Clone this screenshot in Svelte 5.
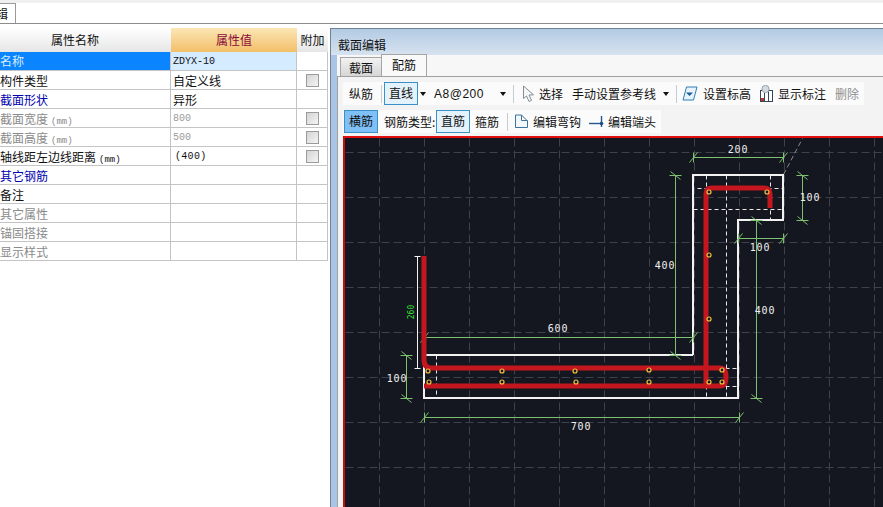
<script>
const rows = [
  { name: "名称", value: "ZDYX-10", selected: true },
  { name: "构件类型", value: "自定义线", cjk: true, check: true },
  { name: "截面形状", value: "异形", cjk: true, kind: "blue" },
  { name: "截面宽度", unit: "(mm)", value: "800", kind: "gray", check: true },
  { name: "截面高度", unit: "(mm)", value: "500", kind: "gray", check: true },
  { name: "轴线距左边线距离", unit: "(mm)", value: "(400)", indent: true, check: true },
  { name: "其它钢筋", value: "", kind: "blue" },
  { name: "备注", value: "" },
  { name: "其它属性", value: "", kind: "gray" },
  { name: "锚固搭接", value: "", kind: "gray" },
  { name: "显示样式", value: "", kind: "gray" }
]

const gridX = [379, 424, 469, 514, 559, 604, 649, 694, 739, 784, 829, 874]
const gridY = [152, 197, 242, 287, 332, 377, 422, 467]

const dots = [
  [428, 371], [429, 382], [502, 371], [502, 382], [575, 371], [576, 382],
  [649, 370], [649, 382], [722, 370], [722, 382], [709, 382],
  [709, 319], [709, 255], [709, 192], [767, 192]
]

// dimension lines: [x1, y1, x2, y2]
const dims = [
  [693, 157, 783, 157],
  [802, 175, 802, 220],
  [738, 238, 783, 238],
  [756, 220, 756, 238],
  [675, 175, 675, 355],
  [424, 337, 693, 337],
  [756, 238, 756, 398],
  [424, 417, 739, 417],
  [406, 355, 406, 398]
]
// ends of horizontal dimensions get a "/" tick, vertical ones a "\" tick
const hTicks = [[693, 157], [783, 157], [738, 238], [783, 238], [424, 337], [693, 337], [424, 417], [739, 417]]
const vTicks = [[802, 175], [802, 220], [756, 220], [675, 175], [675, 355], [756, 398], [406, 355], [406, 398]]

const labels = [
  ["200", 738, 153], ["100", 810, 201], ["100", 760, 251], ["400", 665, 269],
  ["600", 558, 332], ["400", 765, 314], ["700", 581, 430], ["100", 397, 382]
]
</script>

<div class="page">
  <div class="tabbar">
    <div class="doc-tab"><span>辑</span></div>
  </div>
  <div class="main">
    <div class="left">
      <div class="grid">
        <div class="hd first-hd">属性名称</div>
        <div class="hd val">属性值</div>
        <div class="hd">附加</div>
        {#each rows as r}
          <div class="cell name {r.kind || ''}" class:selected={r.selected}>{r.name}{#if r.unit}<span class="unit">{r.unit}</span>{/if}</div>
          <div class="cell value" class:cjk={r.cjk} class:indent={r.indent} class:selected-val={r.selected} class:muted={r.kind === "gray"}>{r.value}</div>
          <div class="cell chk">{#if r.check}<span class="box"></span>{/if}</div>
        {/each}
      </div>
    </div>

    <div class="panel">
      <div class="title">截面编辑</div>
      <div class="tabs">
        <div class="tab">截面</div>
        <div class="tab active">配筋</div>
      </div>
      <div class="content">
        <div class="bar one">
          <span class="t first">纵筋</span>
          <i class="sep"></i>
          <span class="btn line">直线</span>
          <i class="arrow a1"></i>
          <span class="spec">A8@200</span>
          <i class="arrow a2"></i>
          <i class="sep s2"></i>
          <svg class="ico cur" width="13" height="18" viewBox="0 0 13 18"><path d="M1.5 1 L1.5 13.5 L4.5 11 L7 16.5 L9.5 15.3 L7 10 L11.5 9.8 Z" fill="#f6f7f8" stroke="#838c95" /></svg>
          <span class="t sel">选择</span>
          <span class="t manual">手动设置参考线</span>
          <i class="arrow a3"></i>
          <i class="sep s3"></i>
          <svg class="ico flag" width="16" height="15" viewBox="0 0 16 15"><path d="M4.5 1 H15 L11.5 14 H1 Z" fill="#e8f3fb" stroke="#2f7fb5" /><path d="M4 6.5 H11 L7.5 10 Z" fill="#1d5f95" /></svg>
          <span class="t">设置标高</span>
          <svg class="ico chart" width="15" height="17" viewBox="0 0 15 17"><rect x="1.5" y="5.5" width="12" height="11" fill="#fff" stroke="#33465a" /><path d="M5.5 8V16M9.5 6V16" stroke="#33465a" /><rect x="2" y="13" width="3" height="3" fill="#b33" /><circle cx="6.5" cy="4" r="3.6" fill="#d4dae0" stroke="#97a0aa" /></svg>
          <span class="t">显示标注</span>
          <span class="t del">删除</span>
        </div>
        <div class="bar two">
          <span class="btn on">横筋</span>
          <span class="t kind">钢筋类型:</span>
          <span class="btn straight">直筋</span>
          <span class="t stir">箍筋</span>
          <i class="sep s4"></i>
          <svg class="ico hook" width="15" height="15" viewBox="0 0 15 15"><path d="M1.5 1 H7.5 V6.5 H13.5 V13.5 H1.5 Z" fill="#f2f7fb" stroke="#3f719b" /><path d="M7.5 1 L13 6.5" stroke="#3f719b" /></svg>
          <span class="t">编辑弯钩</span>
          <svg class="ico end" width="16" height="13" viewBox="0 0 16 13"><path d="M0 8.5 H14" stroke="#24598f" stroke-width="1.4" /><path d="M12.5 1 V12" stroke="#24598f" stroke-width="1.4" /><circle cx="12.5" cy="8.5" r="1.8" fill="#1d4f85" /></svg>
          <span class="t">编辑端头</span>
        </div>
        <div class="canvas">
          <svg width="538" height="369" viewBox="345 138 538 369">
            <rect x="345" y="138" width="538" height="369" fill="#14171f" />
            <g transform="translate(0.5 0.5)">
              {#each gridX as x}
                <line x1={x} y1="138" x2={x} y2="507" class="gridline" />
              {/each}
              {#each gridY as y}
                <line x1="345" y1={y} x2="883" y2={y} class="gridline" />
              {/each}
              <path d="M783 174 L802 138" class="helper" />
              <path d="M706 175V398M726 175V398M770 175V220M436 355V398M697 188H783M693 209H783M725 368H738M725 386H738" class="dash" />
            </g>

            <path d="M693 355V175H783V220H738V398H424V355H693" class="outline" />

            <g transform="translate(0.5 0.5)">
              {#each dims as d}
                <line x1={d[0]} y1={d[1]} x2={d[2]} y2={d[3]} class="dim" />
              {/each}
              {#each hTicks as t}
                <path d="M{t[0] - 4} {t[1] + 5} L{t[0] + 4} {t[1] - 5} M{t[0]} {t[1] - 5} V{t[1] + 5}" class="dim" />
              {/each}
              {#each vTicks as t}
                <path d="M{t[0] - 5} {t[1] - 4} L{t[0] + 5} {t[1] + 4} M{t[0] - 6} {t[1]} H{t[0] + 6}" class="dim" />
              {/each}
              <path d="M417 256V368M414 256H420M414 368H420" class="white-dim" />
            </g>
            <text class="small" transform="translate(414 312) rotate(-90)" text-anchor="middle">260</text>

            <path d="M424 256V360Q424 368 432 368H720Q726 368 726 377Q726 386 720 386H424" class="bar-steel" />
            <path d="M706 386V194Q706 188 712 188H764Q770 188 770 194V208" class="bar-steel" />

            {#each dots as d}
              <circle cx={d[0]} cy={d[1]} r="2" class="dot" />
            {/each}
            {#each labels as l}
              <text x={l[1]} y={l[2]} class="num" text-anchor="middle">{l[0]}</text>
            {/each}
          </svg>
        </div>
      </div>
    </div>
  </div>
</div>

<style>
:global(body) {
  margin: 0;
  background: #fff;
}
.page {
  width: 883px;
  height: 507px;
  overflow: hidden;
  font-family: "Noto Sans CJK SC", "Liberation Sans", sans-serif;
  font-size: 12px;
  color: #111;
  background: #fff;
}
.tabbar {
  height: 20px;
  padding-top: 3px;
  background: linear-gradient(#f0f0f0 3px, #fff 3px);
  border-bottom: 1px solid #8c8c8c;
}
.doc-tab {
  width: 16px;
  height: 20px;
  box-sizing: border-box;
  border: 1px solid #9a9a9a;
  border-left: 0;
  border-bottom: 0;
  background: #fff;
  overflow: hidden;
  line-height: 19px;
}
.doc-tab span {
  display: block;
  margin-left: -4px;
}
.main {
  display: flex;
  height: 483px;
}
.left {
  width: 330px;
  flex: none;
  padding-top: 4px;
  box-sizing: border-box;
}
.grid {
  display: grid;
  width: 328px;
  grid-template-columns: 171px 126px 31px;
  grid-template-rows: 24px repeat(11, 19px);
  line-height: 19px;
}
.hd {
  text-align: center;
  line-height: 24px;
  background: linear-gradient(#fff, #e6e6e6);
}
.first-hd {
  padding-right: 21px;
}
.hd.val {
  background: linear-gradient(#fbe6b4, #f3bf6a);
  color: #8a0a3c;
}
.cell {
  border-bottom: 1px solid #c4c4c4;
  border-right: 1px solid #c4c4c4;
  box-sizing: border-box;
  white-space: nowrap;
  overflow: hidden;
}
.name.blue {
  color: #0000b0;
}
.name.gray {
  color: #8a8a8a;
}
.name.selected {
  background: #0a84ff;
  color: #d8ecff;
  line-height: 18px;
}
.unit {
  font-family: "Liberation Mono", monospace;
  font-size: 9px;
  margin-left: 3px;
}
.value {
  font-family: "Liberation Mono", monospace;
  font-size: 10px;
  padding-left: 2px;
}
.value.cjk {
  font-family: "Noto Sans CJK SC", sans-serif;
  font-size: 12px;
}
.value.indent {
  padding-left: 4px;
  letter-spacing: 0.3px;
}
.value.selected-val {
  background: #d5ebff;
}
.value.muted {
  color: #9a9a9a;
}
.chk {
  display: flex;
  padding-left: 9px;
  padding-top: 3px;
}
.box {
  width: 11px;
  height: 11px;
  border: 1px solid #9b9b9b;
  background: linear-gradient(135deg, #d4d4d4, #f4f4f4);
}
.panel {
  flex: 1;
  min-width: 0;
  margin-top: 4px;
  border: 1px solid #6f8296;
  border-right: 0;
  border-bottom: 0;
  padding-left: 6px;
  background: #a9c4e4;
  overflow: hidden;
}
.title {
  height: 26px;
  line-height: 32px;
  background: linear-gradient(#b3cbe4, #d6e2ef);
  margin-left: -6px;
  padding-left: 7px;
}
.tabs {
  display: flex;
  height: 21px;
  padding-left: 3px;
  border-bottom: 1px solid #a0a0a0;
  background: #f7f7f7;
  align-items: flex-end;
}
.tab {
  width: 40px;
  height: 18px;
  line-height: 19px;
  text-align: center;
  background: linear-gradient(#f2f2f2, #d6d6d6);
  border: 1px solid #a5a5a5;
  border-bottom: 0;
}
.tab.active {
  width: 44px;
  height: 21px;
  line-height: 19px;
  background: #f9f9f9;
  margin-left: -1px;
}
.content {
  background: #f3f3f3;
  height: 431px;
  border-left: 1px solid #a0a0a0;
  padding-left: 5px;
  padding-top: 5px;
  box-sizing: border-box;
}
.bar {
  display: flex;
  align-items: center;
  background: #fbfbfb;
  white-space: nowrap;
}
.bar.one {
  width: 521px;
  height: 23px;
  margin-bottom: 5px;
}
.bar.two {
  width: 318px;
  height: 23px;
}
.t {
  line-height: 20px;
}
.first {
  margin-left: 6px;
}
.sep {
  width: 1px;
  height: 18px;
  background: #c4ccd4;
  margin-left: 8px;
}
.btn {
  box-sizing: border-box;
  height: 23px;
  line-height: 20px;
  width: 34px;
  text-align: center;
  border: 1px solid #3a90c8;
  background: #e4f2fb;
}
.btn.line {
  margin-left: 2px;
}
.btn.on {
  margin-left: 1px;
  background: #7fc0f7;
}
.arrow {
  width: 0;
  height: 0;
  border: 3px solid transparent;
  border-top: 4px solid #111;
  border-bottom: 0;
}
.a1 {
  margin-left: 2px;
}
.spec {
  margin-left: 8px;
  width: 66px;
  font-family: "Liberation Sans", sans-serif;
  font-size: 12px;
  letter-spacing: 0.5px;
}
.s2 {
  margin-left: 7px;
}
.ico {
  flex: none;
  display: block;
}
.cur {
  margin-left: 8px;
}
.sel {
  margin-left: 4px;
}
.manual {
  margin-left: 9px;
}
.a3 {
  margin-left: 7px;
}
.s3 {
  margin-left: 7px;
}
.flag {
  margin: 0 5px;
}
.chart {
  margin: 0 4px 0 8px;
}
.del {
  margin-left: 9px;
  color: #8d8d8d;
}
.kind {
  margin-left: 6px;
  width: 47px;
}
.straight {
  margin-left: 5px;
}
.stir {
  margin-left: 5px;
}
.s4 {
  margin-left: 8px;
}
.hook {
  margin: 0 4px 0 6px;
}
.end {
  margin: 0 3px 0 8px;
}
.canvas {
  margin-top: 3px;
  border-top: 2px solid #e01010;
  border-left: 2px solid #c80c0c;
  overflow: hidden;
  height: 371px;
}
.canvas svg {
  display: block;
}
.gridline {
  stroke: #3e4149;
  stroke-width: 1;
  stroke-dasharray: 8 4;
}
.helper {
  stroke: #888;
  fill: none;
  stroke-dasharray: 5 3;
}
.dash {
  stroke: #e8e8e8;
  fill: none;
  stroke-dasharray: 4 3;
}
.outline {
  stroke: #f2f2f2;
  stroke-width: 2;
  fill: none;
}
.dim {
  stroke: #7cc070;
  stroke-width: 1;
  fill: none;
}
.white-dim {
  stroke: #f2f2f2;
  fill: none;
}
.bar-steel {
  stroke: #c4161f;
  stroke-width: 5;
  fill: none;
}
.dot {
  fill: #14171f;
  stroke: #f5c040;
  stroke-width: 1.2;
}
.num {
  fill: #f0f0f0;
  font-family: "DejaVu Sans Mono", monospace;
  font-size: 10px;
  letter-spacing: 0.8px;
}
.small {
  fill: #35e035;
  font-family: "DejaVu Sans Mono", monospace;
  font-size: 8px;
}
</style>
